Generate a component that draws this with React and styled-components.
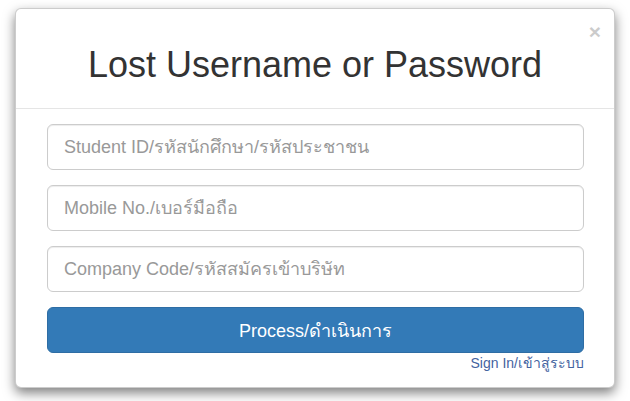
import React from 'react'
import styled, { createGlobalStyle } from 'styled-components'

const GlobalStyle = createGlobalStyle`
  html, body {
    margin: 0;
    padding: 0;
    background: #ffffff;
    font-family: "Liberation Sans", Arial, "Noto Sans", sans-serif;
  }
`

const Page = styled.div`
  width: 630px;
  height: 401px;
  padding: 8px 15px 0 15px;
  box-sizing: border-box;
`

const Modal = styled.div`
  width: 600px;
  height: 380px;
  box-sizing: border-box;
  background: #ffffff;
  border: 1px solid rgba(0, 0, 0, 0.2);
  border-radius: 6px;
  box-shadow: 0 5px 12px rgba(0, 0, 0, 0.5);
  display: flex;
  flex-direction: column;
`

const Header = styled.div`
  position: relative;
  height: 100px;
  box-sizing: border-box;
  border-bottom: 1px solid #e5e5e5;
  display: flex;
  align-items: center;
  justify-content: center;
`

const Title = styled.h1`
  margin: 0;
  padding-top: 12px;
  font-size: 36px;
  font-weight: 400;
  color: #333333;
  line-height: 1.1;
`

const Close = styled.span`
  position: absolute;
  right: 13px;
  top: 12px;
  font-size: 21px;
  font-weight: 700;
  color: #000000;
  opacity: 0.2;
  line-height: 1;
`

const Body = styled.form`
  padding: 15px 30px 0 31px;
  display: flex;
  flex-direction: column;
  gap: 15px;
`

const Input = styled.input`
  height: 46px;
  box-sizing: border-box;
  width: 100%;
  padding: 0 16px;
  font-family: inherit;
  font-size: 18px;
  color: #555555;
  border: 1px solid #cccccc;
  border-radius: 6px;
  box-shadow: inset 0 1px 1px rgba(0, 0, 0, 0.075);
  outline: none;

  &::placeholder {
    color: #999999;
  }
`

const Button = styled.button`
  height: 46px;
  width: 100%;
  font-family: inherit;
  font-size: 18px;
  color: #ffffff;
  background: #337ab7;
  border: 1px solid #2e6da4;
  border-radius: 6px;
`

const Footer = styled.div`
  display: flex;
  justify-content: flex-end;
  margin-top: -16px;
`

const SignIn = styled.a`
  font-size: 14px;
  color: #43639f;
  text-decoration: none;
`

const fields = [
  'Student ID/รหัสนักศึกษา/รหัสประชาชน',
  'Mobile No./เบอร์มือถือ',
  'Company Code/รหัสสมัครเข้าบริษัท'
]

const App = () => (
  <>
    <GlobalStyle />
    <Page>
      <Modal>
        <Header>
          <Title>Lost Username or Password</Title>
          <Close>×</Close>
        </Header>
        <Body onSubmit={(e) => e.preventDefault()}>
          {fields.map((f) => (
            <Input key={f} placeholder={f} />
          ))}
          <Button type="submit">Process/ดำเนินการ</Button>
          <Footer>
            <SignIn href="#">Sign In/เข้าสู่ระบบ</SignIn>
          </Footer>
        </Body>
      </Modal>
    </Page>
  </>
)

export default App
